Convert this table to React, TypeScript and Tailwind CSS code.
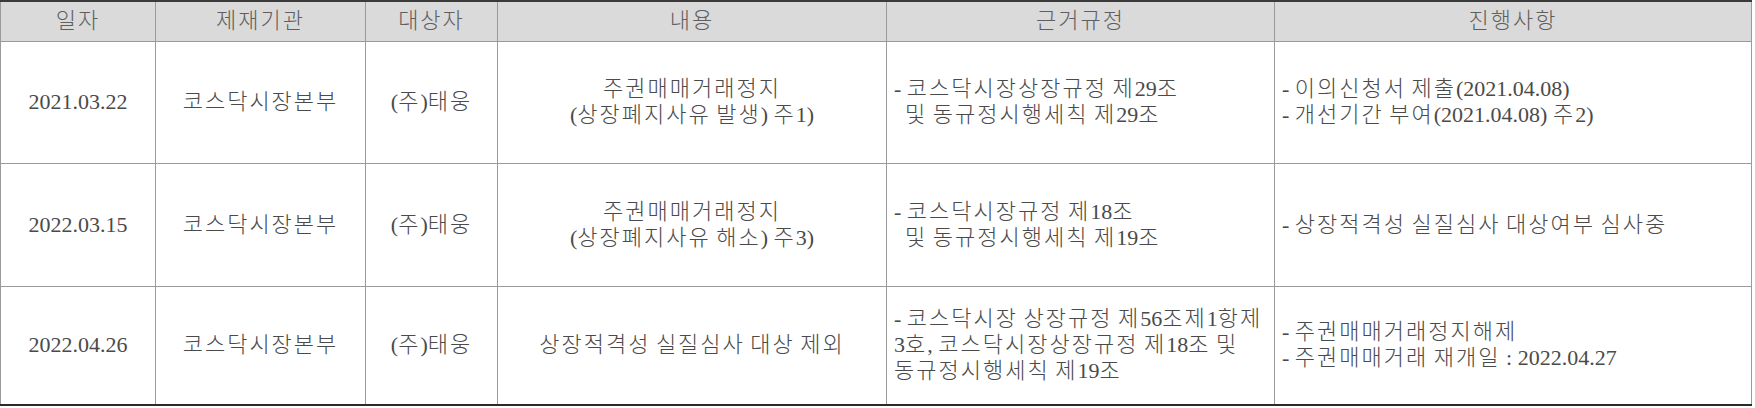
import React from "react";

const font = { fontFamily: '"Liberation Serif", "Noto Sans CJK KR", serif' };

function T({ s }: { s: string }) {
  const parts = s.split(/([\uAC00-\uD7A3\u3131-\u318E]+)/);
  return (
    <>
      {parts.map((p, i) =>
        i % 2 === 1 ? (
          <span key={i} className="tracking-[2px] font-light">
            {p}
          </span>
        ) : (
          <span key={i}>{p}</span>
        )
      )}
    </>
  );
}

function Lines({ lines, indent }: { lines: string[]; indent?: number[] }) {
  return (
    <>
      {lines.map((l, i) => (
        <div key={i} className={indent && indent.includes(i) ? "pl-[11px]" : ""}>
          <T s={l} />
        </div>
      ))}
    </>
  );
}

type Row = {
  date: string;
  content: string[];
  rule: string[];
  ruleIndent?: number[];
  progress: string[];
  h: string;
};

const rows: Row[] = [
  {
    date: "2021.03.22",
    content: ["주권매매거래정지", "(상장폐지사유 발생) 주1)"],
    rule: ["- 코스닥시장상장규정 제29조", "및 동규정시행세칙 제29조"],
    ruleIndent: [1],
    progress: ["- 이의신청서 제출(2021.04.08)", "- 개선기간 부여(2021.04.08) 주2)"],
    h: "h-[122px]",
  },
  {
    date: "2022.03.15",
    content: ["주권매매거래정지", "(상장폐지사유 해소) 주3)"],
    rule: ["- 코스닥시장규정 제18조", "및 동규정시행세칙 제19조"],
    ruleIndent: [1],
    progress: ["- 상장적격성 실질심사 대상여부 심사중"],
    h: "h-[123px]",
  },
  {
    date: "2022.04.26",
    content: ["상장적격성 실질심사 대상 제외"],
    rule: [
      "- 코스닥시장 상장규정 제56조제1항제",
      "3호, 코스닥시장상장규정 제18조 및",
      "동규정시행세칙 제19조",
    ],
    progress: ["- 주권매매거래정지해제", "- 주권매매거래 재개일 : 2022.04.27"],
    h: "h-[119px]",
  },
];

export default function App() {
  const th =
    "border-x border-[#9a9a9a] bg-[#dadada] text-[#5f5f5f] font-normal text-center align-middle px-1";
  const tdC =
    "border border-[#9a9a9a] text-center align-middle whitespace-nowrap px-1";
  const tdL =
    "border border-[#9a9a9a] text-left align-middle whitespace-nowrap pl-[7px] pr-1";
  const headers = ["일자", "제재기관", "대상자", "내용", "근거규정", "진행사항"];
  return (
    <div className="w-[1755px] h-[408px] bg-white" style={font}>
      <table className="w-[1752px] table-fixed border-collapse border-t-2 border-b-2 border-x border-t-[#3a3a3a] border-b-[#2a2a2a] border-x-[#555] text-[22px] leading-[26px] text-[#4a4a4a]">
        <colgroup>
          <col className="w-[155px]" />
          <col className="w-[210px]" />
          <col className="w-[132px]" />
          <col className="w-[389px]" />
          <col className="w-[388px]" />
          <col />
        </colgroup>
        <thead>
          <tr className="h-[40px] border-b border-[#8a8a8a]">
            {headers.map((h) => (
              <th key={h} className={th}>
                <T s={h} />
              </th>
            ))}
          </tr>
        </thead>
        <tbody>
          {rows.map((r, i) => (
            <tr key={i} className={r.h}>
              <td className={tdC}>{r.date}</td>
              <td className={tdC}>
                <T s="코스닥시장본부" />
              </td>
              <td className={tdC}>
                <T s="(주)태웅" />
              </td>
              <td className={tdC}>
                <Lines lines={r.content} />
              </td>
              <td className={tdL}>
                <Lines lines={r.rule} indent={r.ruleIndent} />
              </td>
              <td className={tdL}>
                <Lines lines={r.progress} />
              </td>
            </tr>
          ))}
        </tbody>
      </table>
    </div>
  );
}
